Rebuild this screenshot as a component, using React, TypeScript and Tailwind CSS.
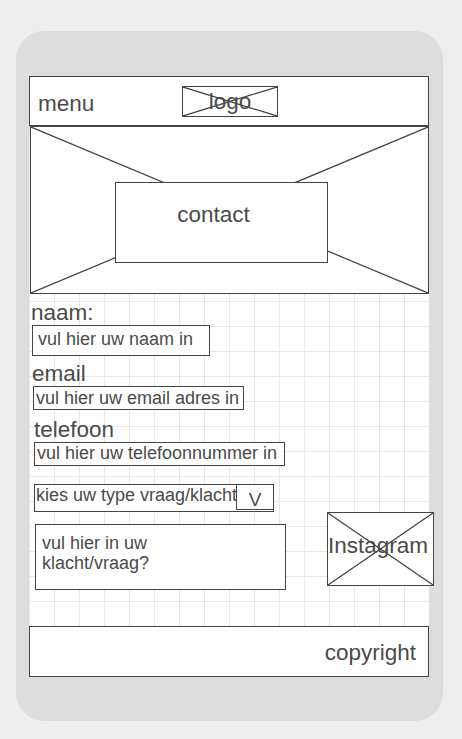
// Contact page wireframe (mobile)

function CrossBox({ className = '' }: { className?: string }) {
  return (
    <svg
      className={`absolute inset-0 h-full w-full ${className}`}
      viewBox="0 0 100 100"
      preserveAspectRatio="none"
    >
      <line x1="0" y1="0" x2="100" y2="100" stroke="#3f3f3f" strokeWidth="1.2" vectorEffect="non-scaling-stroke" />
      <line x1="100" y1="0" x2="0" y2="100" stroke="#3f3f3f" strokeWidth="1.2" vectorEffect="non-scaling-stroke" />
    </svg>
  );
}

export default function App() {
  return (
    <div className="w-[462px] h-[739px] bg-[#eeeeee] pt-[31px] pl-[16px] font-['Liberation_Sans',Arial,sans-serif] text-[#4a4a4a]">
      <div className="w-[427px] h-[690px] rounded-[28px] bg-[#dddddd] pt-[45px] pl-[13px]">
        <div className="w-[400px] h-[601px] flex flex-col bg-white bg-[linear-gradient(to_right,#e8e8e8_1px,transparent_1px),linear-gradient(to_bottom,#e8e8e8_1px,transparent_1px)] bg-[size:25px_25px]">
          {/* header */}
          <div className="h-[50px] shrink-0 flex items-center border border-[#444] bg-white pl-[8px]">
            <span className="w-[144px] text-[22.5px] leading-[25px] pt-[5px]">menu</span>
            <div className="relative w-[96px] h-[31px] border border-[#444] flex items-center justify-center">
              <CrossBox />
              <span className="relative text-[22.5px] leading-[25px]">logo</span>
            </div>
          </div>

          {/* hero */}
          <div className="relative ml-[1px] h-[168px] shrink-0 border border-[#444] bg-white pl-[84px] pt-[55px]">
            <CrossBox />
            <div className="relative w-[213px] h-[81px] border border-[#444] bg-white pt-[19px] pr-[16px] text-center text-[22.5px] leading-[25px]">
              contact
            </div>
          </div>

          {/* form */}
          <div className="flex flex-col pt-[6px]">
            <span className="ml-[2px] text-[22.5px] leading-[25px]">naam:</span>
            <div className="ml-[3px] w-[178px] h-[31px] border border-[#444] bg-white pl-[5px] pt-[3px] text-[18px] leading-[20px]">
              vul hier uw naam in
            </div>

            <span className="ml-[3px] mt-[5px] text-[22.5px] leading-[25px]">email</span>
            <div className="ml-[4px] w-[211px] h-[24px] border border-[#444] bg-white pl-[2px] pt-px text-[18px] leading-[20px] whitespace-nowrap">
              vul hier uw email adres in
            </div>

            <span className="ml-[5px] mt-[7px] text-[22.5px] leading-[25px]">telefoon</span>
            <div className="ml-[5px] w-[251px] h-[24px] border border-[#444] bg-white pl-[2px] text-[18px] leading-[20px] whitespace-nowrap">
              vul hier uw telefoonnummer in
            </div>

            <div className="ml-[5px] mt-[18px] w-[240px] h-[28px] flex border border-[#444] bg-white">
              <span className="w-[201px] pl-px text-[18px] leading-[20px] whitespace-nowrap">kies uw type vraag/klacht</span>
              <span className="flex-1 border-l border-b border-[#444] mb-px text-center text-[19px] leading-[20px] pt-[5px]">V</span>
            </div>

            <div className="flex items-start">
              <div className="ml-[6px] mt-[12px] w-[251px] h-[66px] shrink-0 border border-[#444] bg-white pl-[6px] pt-[8px] text-[18px] leading-[20px]">
                vul hier in uw
                <br />
                klacht/vraag?
              </div>
              <div className="relative ml-[41px] w-[107px] h-[74px] shrink-0 border border-[#444] bg-white pt-[20px] pr-[10px] text-center">
                <CrossBox />
                <span className="relative text-[22.5px] leading-[25px] whitespace-nowrap">Instagram</span>
              </div>
            </div>
          </div>

          {/* footer */}
          <div className="mt-auto h-[51px] shrink-0 flex items-center justify-end border border-[#444] bg-white pr-[12px]">
            <span className="text-[22.5px] leading-[25px] pt-px">copyright</span>
          </div>
        </div>
      </div>
    </div>
  );
}
